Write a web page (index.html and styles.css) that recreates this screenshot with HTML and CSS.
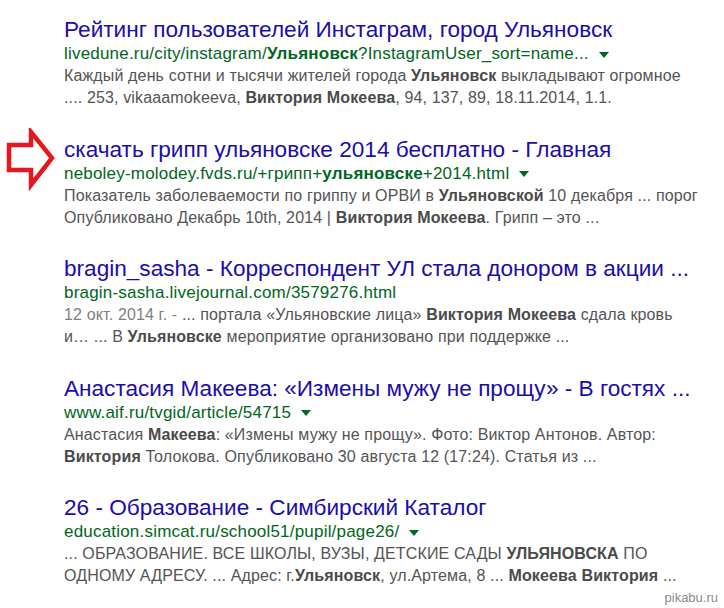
FILE: index.html
```html
<!DOCTYPE html>
<html lang="ru">
<head>
    <meta charset="UTF-8">
    <title>Виктория Мокеева - поиск</title>
    <link rel="stylesheet" href="styles.css">
</head>
<body>
    <div class="results">
        <div class="result">
            <a class="title" href="#">Рейтинг пользователей Инстаграм, город Ульяновск</a>
            <div class="url">livedune.ru/city/instagram/<b>Ульяновск</b>?InstagramUser_sort=name... <span class="drop"></span></div>
            <div class="snippet">
                <div>Каждый день сотни и тысячи жителей города <b>Ульяновск</b> выкладывают огромное</div>
                <div>.... 253, vikaaamokeeva, <b>Виктория Мокеева</b>, 94, 137, 89, 18.11.2014, 1.1.</div>
            </div>
        </div>

        <div class="result">
            <svg class="pointer" width="60" height="66" viewBox="0 0 60 66">
                <path d="M9 17 L31 17 L31 4 L52 30 L31 57 L31 42 L9 42 Z" fill="none" stroke="#e8161f" stroke-width="4.5"/>
            </svg>
            <a class="title" href="#">скачать грипп ульяновске 2014 бесплатно - Главная</a>
            <div class="url">neboley-molodey.fvds.ru/+грипп+<b>ульяновске</b>+2014.html <span class="drop"></span></div>
            <div class="snippet">
                <div>Показатель заболеваемости по гриппу и ОРВИ в <b>Ульяновской</b> 10 декабря ... порог</div>
                <div>Опубликовано Декабрь 10th, 2014 | <b>Виктория Мокеева</b>. Грипп – это ...</div>
            </div>
        </div>

        <div class="result">
            <a class="title" href="#">bragin_sasha - Корреспондент УЛ стала донором в акции ...</a>
            <div class="url">bragin-sasha.livejournal.com/3579276.html</div>
            <div class="snippet">
                <div><span class="date">12 окт. 2014 г. - </span>... портала «Ульяновские лица» <b>Виктория Мокеева</b> сдала кровь</div>
                <div>и… ... В <b>Ульяновске</b> мероприятие организовано при поддержке ...</div>
            </div>
        </div>

        <div class="result">
            <a class="title" href="#">Анастасия Макеева: «Измены мужу не прощу» - В гостях ...</a>
            <div class="url">www.aif.ru/tvgid/article/54715 <span class="drop"></span></div>
            <div class="snippet">
                <div>Анастасия <b>Макеева</b>: «Измены мужу не прощу». Фото: Виктор Антонов. Автор:</div>
                <div><b>Виктория</b> Толокова. Опубликовано 30 августа 12 (17:24). Статья из ...</div>
            </div>
        </div>

        <div class="result">
            <a class="title" href="#">26 - Образование - Симбирский Каталог</a>
            <div class="url">education.simcat.ru/school51/pupil/page26/ <span class="drop"></span></div>
            <div class="snippet">
                <div>... ОБРАЗОВАНИЕ. ВСЕ ШКОЛЫ, ВУЗЫ, ДЕТСКИЕ САДЫ <b>УЛЬЯНОВСКА</b> ПО</div>
                <div>ОДНОМУ АДРЕСУ. ... Адрес: г.<b>Ульяновск</b>, ул.Артема, 8 ... <b>Мокеева Виктория</b> ...</div>
            </div>
        </div>
    </div>

    <div class="watermark">pikabu.ru</div>
</body>
</html>
```

FILE: styles.css
```css
* {
    margin: 0;
    padding: 0;
    box-sizing: border-box;
}

body {
    background: white;
    font-family: "Liberation Sans", Arial, sans-serif;
    width: 724px;
    height: 608px;
    overflow: hidden;
    position: relative;
}

.results {
    padding: 17px 0 0 64px;
}

.result {
    position: relative;
    margin-bottom: 27.5px;
    white-space: nowrap;
}

.title {
    display: block;
    font-size: 22.6px;
    line-height: 26px;
    color: #1a0dab;
    text-decoration: none;
}

.url {
    font-size: 17px;
    line-height: 22px;
    letter-spacing: 0.2px;
    color: #006621;
}

.drop {
    display: inline-block;
    margin-left: 5px;
    vertical-align: middle;
    border-top: 6px solid #006621;
    border-left: 5px solid transparent;
    border-right: 5px solid transparent;
}

.snippet {
    font-size: 16px;
    line-height: 22px;
    letter-spacing: 0.14px;
    color: #545454;
}

.snippet b {
    color: #4a4a4a;
}

.date {
    color: #808080;
}

.pointer {
    position: absolute;
    left: -64px;
    top: -9px;
}

.watermark {
    position: absolute;
    right: 6px;
    bottom: 3px;
    font-size: 13px;
    color: #8a8a8a;
    text-shadow: 1px 1px 0 #fff, -1px -1px 0 #fff, 1px -1px 0 #fff, -1px 1px 0 #fff;
}
```
